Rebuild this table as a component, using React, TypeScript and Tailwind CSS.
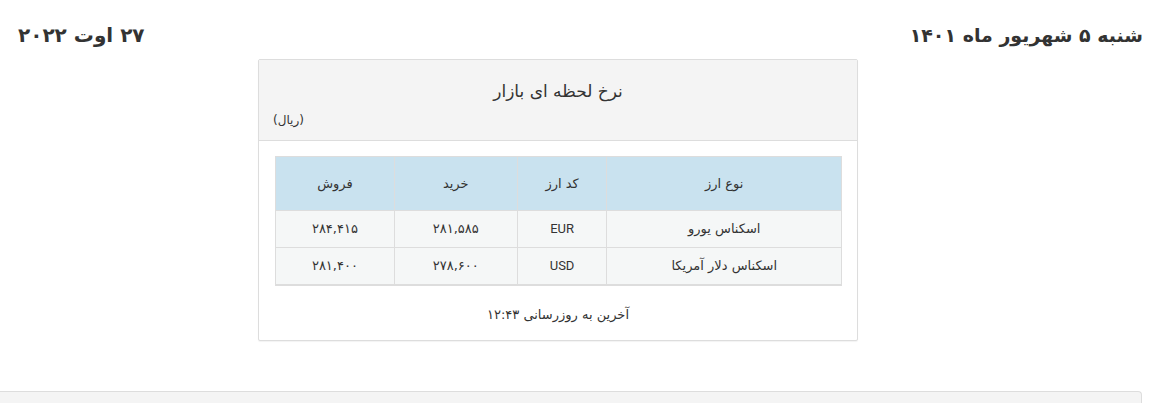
import React from 'react';

const rows = [
  { name: 'اسکناس یورو', code: 'EUR', buy: '۲۸۱,۵۸۵', sell: '۲۸۴,۴۱۵' },
  { name: 'اسکناس دلار آمریکا', code: 'USD', buy: '۲۷۸,۶۰۰', sell: '۲۸۱,۴۰۰' },
];

const App: React.FC = () => {
  return (
    <div dir="rtl" className="w-[1150px] h-[403px] bg-white text-[#333] overflow-hidden" style={{ fontFamily: '"DejaVu Sans", sans-serif' }}>
      <div className="flex justify-between items-center pt-[20px] pb-[9px] pr-[7px] pl-[18px]">
        <div className="text-[19px] font-bold leading-[30px] text-[#333]">شنبه ۵ شهریور ماه ۱۴۰۱</div>
        <div className="text-[20px] font-bold leading-[30px] text-[#333]">۲۷ اوت ۲۰۲۲</div>
      </div>

      <div className="mr-[292px] w-[600px] border border-[#ddd] rounded-[2px] shadow-[0_1px_1px_rgba(0,0,0,0.05)] bg-white">
        <div className="bg-[#f4f4f4] border-b border-[#ddd] px-[14px] pt-[18px] pb-[10px]">
          <div className="text-center text-[17px] leading-[26px]">نرخ لحظه ای بازار</div>
          <div className="text-left text-[12px] leading-[20px] mt-[6px]">(ریال)</div>
        </div>
        <div className="p-[15px]">
          <table className="w-[567px] border-collapse text-[13px] text-[#333]">
            <thead>
              <tr className="bg-[#c9e2ef] h-[54px]">
                <th className="w-[235px] border border-[#ddd] font-normal">نوع ارز</th>
                <th className="w-[90px] border border-[#ddd] font-normal">کد ارز</th>
                <th className="w-[123px] border border-[#ddd] font-normal">خرید</th>
                <th className="w-[119px] border border-[#ddd] font-normal">فروش</th>
              </tr>
            </thead>
            <tbody>
              {rows.map((r, i) => (
                <tr key={i} className={`bg-[#f5f7f7] h-[37px] ${i === rows.length - 1 ? 'border-b-2 border-[#ddd]' : ''}`}>
                  <td className="border border-[#ddd] text-center">{r.name}</td>
                  <td className="border border-[#ddd] text-center" style={{ fontFamily: '"Roboto", sans-serif', fontSize: 13 }}>{r.code}</td>
                  <td className="border border-[#ddd] text-center">{r.buy}</td>
                  <td className="border border-[#ddd] text-center">{r.sell}</td>
                </tr>
              ))}
            </tbody>
          </table>
          <div className="text-center text-[13px] leading-[20px] mt-[19px]">آخرین به روزرسانی ۱۲:۴۳</div>
        </div>
      </div>

      <div className="mt-[50px] mr-[8px] h-[20px] bg-[#f4f4f4] border-t border-r border-[#ddd] rounded-tr-[4px]" />
    </div>
  );
};

export default App;
